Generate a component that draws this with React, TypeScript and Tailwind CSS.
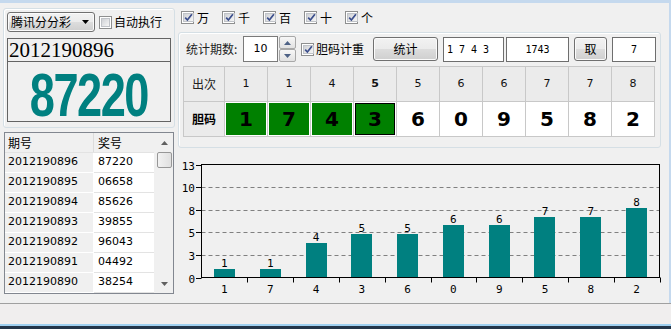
import React from 'react';

const cjk = "font-['Noto_Sans_CJK_SC',sans-serif]";
const btnBg =
  'bg-[linear-gradient(#f2f2f2,#ebebeb_50%,#dddddd_50%,#cfcfcf)] border border-[#707070] rounded-[3px] shadow-[inset_0_0_0_1px_#fbfbfb]';

function CheckBox({ checked = false }: { checked?: boolean }) {
  return (
    <span className="w-[13px] h-[13px] shrink-0 border border-[#8e8f8f] bg-white p-[1px] flex">
      <span className="flex-1 flex items-center justify-center bg-[linear-gradient(135deg,#cfd1d5,#f6f6f6)] border border-[#c0c3c8]">
        {checked && (
          <svg width="9" height="9" viewBox="0 0 9 9">
            <path d="M1.2 4.6 L3.4 7 L7.9 1.2" stroke="#3b4e8c" strokeWidth="1.7" fill="none" />
          </svg>
        )}
      </span>
    </span>
  );
}

const history = [
  ['2012190896', '87220'],
  ['2012190895', '06658'],
  ['2012190894', '85626'],
  ['2012190893', '39855'],
  ['2012190892', '96043'],
  ['2012190891', '04492'],
  ['2012190890', '38254'],
];

const times = ['1', '1', '4', '5', '5', '6', '6', '7', '7', '8'];
const dan = ['1', '7', '4', '3', '6', '0', '9', '5', '8', '2'];
const counts = [1, 1, 4, 5, 5, 6, 6, 7, 7, 8];

function Chart() {
  const left = 23.5;
  const right = 481.5;
  const top = 14.5;
  const bottom = 127.5;
  const unit = (bottom - top) / 13;
  const step = (right - left) / 10;
  const grid = [
    { v: 10.4, label: '10' },
    { v: 7.8, label: '8' },
    { v: 5.2, label: '5' },
    { v: 2.6, label: '3' },
  ];
  const yOf = (v: number) => bottom - v * unit;
  const font = { fontFamily: 'DejaVu Sans Mono, monospace', fontSize: 11 };

  return (
    <svg width="483" height="150" className="block">
      {grid.map((g) => (
        <line
          key={g.label}
          x1={left}
          x2={right}
          y1={Math.round(yOf(g.v)) + 0.5}
          y2={Math.round(yOf(g.v)) + 0.5}
          stroke="#808080"
          strokeDasharray="4 3"
        />
      ))}
      {counts.map((c, i) => {
        const cx = left + step * i + step / 2;
        const y = Math.round(yOf(c));
        return (
          <g key={i}>
            <rect x={Math.round(cx - 10.5)} y={y} width={21} height={bottom - 0.5 - y} fill="#008080" />
            <text x={cx} y={y - 2} textAnchor="middle" {...font} fill="#000">
              {c}
            </text>
            <text x={cx} y={143} textAnchor="middle" {...font} fill="#000">
              {dan[i]}
            </text>
            <line x1={Math.round(left + step * (i + 1)) + 0.5} x2={Math.round(left + step * (i + 1)) + 0.5} y1={bottom} y2={bottom + 5} stroke="#000" />
          </g>
        );
      })}
      <rect x={left} y={top} width={right - left} height={bottom - top} fill="none" stroke="#000" />
      {[{ v: 13, label: '13' }, ...grid, { v: 0, label: '0' }].map((g) => {
        const y = Math.round(yOf(g.v)) + 0.5;
        return (
          <g key={'y' + g.label}>
            <line x1={18} x2={left} y1={y} y2={y} stroke="#000" />
            <text x={17} y={y + 4} textAnchor="end" {...font} fill="#000">
              {g.label}
            </text>
          </g>
        );
      })}
    </svg>
  );
}

function LeftPanel() {
  return (
    <div className="w-[177px] flex flex-col">
      <div className="mt-[5px] ml-[3px] w-[172px] h-[120px] border border-[#d5dfe5] rounded-[3px] shadow-[inset_1px_1px_0_#fff] px-[3px] pt-[3px]">
        <div className="flex items-center h-[20px]">
          <div className={`w-[88px] h-[20px] ${btnBg} flex items-center pl-[3px] pr-[5px]`}>
            <span className={`${cjk} text-[12px] leading-none text-black flex-1`}>腾讯分分彩</span>
            <svg width="7" height="4" viewBox="0 0 7 4">
              <path d="M0 0 H7 L3.5 4 Z" fill="#000" />
            </svg>
          </div>
          <div className="ml-[4px] flex items-center gap-[2px]">
            <CheckBox />
            <span className={`${cjk} text-[12px] leading-none text-black`}>自动执行</span>
          </div>
        </div>
        <div className="mt-[6px] w-[164px] h-[24px] border border-[#646464] flex items-center pl-[1px]">
          <span className="font-['Liberation_Serif',serif] text-[21px] leading-none text-black">2012190896</span>
        </div>
        <div className="w-[164px] h-[60px] border-x border-b border-[#646464] flex items-center justify-center">
          <span className="inline-block scale-x-[0.74] font-['Liberation_Sans',sans-serif] font-bold text-[61px] leading-none text-[#008080] mt-[8px] tracking-[-2px]">
            87220
          </span>
        </div>
      </div>

      <div className="mt-[4px] ml-[4px] w-[170px] h-[162px] border border-[#828790] bg-white flex font-['DejaVu_Sans',sans-serif] text-[11px] text-black">
        <div className="w-[149px] flex flex-col">
          <div className="flex h-[20px] bg-[#f0f0f0] border-b border-[#e3e3e3]">
            <div className={`w-[89px] border-r border-[#dcdcdc] pl-[3px] flex items-center ${cjk} text-[12px]`}>期号</div>
            <div className={`w-[60px] pl-[4px] flex items-center ${cjk} text-[12px]`}>奖号</div>
          </div>
          {history.map(([q, n]) => (
            <div key={q} className="flex h-[20px]">
              <div className="w-[89px] bg-[#f0f0f0] border-r border-b border-[#ffffff] pl-[3px] flex items-center">{q}</div>
              <div className="w-[60px] bg-white border-b border-[#e3e3e3] pl-[4px] flex items-center">{n}</div>
            </div>
          ))}
        </div>
        <div className="w-[2px] bg-[#f0f0f0]" />
        <div className="w-[17px] bg-[#f0f0f0] flex flex-col items-center">
          <div className="h-[19px] flex items-center justify-center">
            <svg width="7" height="4" viewBox="0 0 7 4">
              <path d="M0 4 H7 L3.5 0 Z" fill="#606060" />
            </svg>
          </div>
          <div className="w-[15px] h-[16px] border border-[#979797] rounded-[2px] bg-[linear-gradient(90deg,#f2f2f2,#e0e0e0)]" />
          <div className="flex-1" />
          <div className="h-[19px] flex items-center justify-center">
            <svg width="7" height="4" viewBox="0 0 7 4">
              <path d="M0 0 H7 L3.5 4 Z" fill="#606060" />
            </svg>
          </div>
        </div>
      </div>
    </div>
  );
}

function RightPanel() {
  const boxes = ['万', '千', '百', '十', '个'];
  return (
    <div className="w-[492px] flex flex-col">
      <div className="mt-[8px] pl-[4px] flex h-[13px]">
        {boxes.map((b) => (
          <div key={b} className="w-[41px] flex items-center gap-[3px]">
            <CheckBox checked />
            <span className={`${cjk} text-[12px] leading-none text-black`}>{b}</span>
          </div>
        ))}
      </div>

      <div className="mt-[8px] ml-[1px] w-[483px] h-[116px] border border-[#d5dfe5] rounded-[3px] shadow-[inset_1px_1px_0_#fff] pt-[3px] pl-[4px]">
        <div className={`flex items-center h-[26px] ml-[3px] ${cjk} text-[12px] text-black`}>
          <span className="w-[57px] leading-none text-[#222]">统计期数:</span>
          <div className="w-[35px] h-[26px] border border-[#7a7a7a] bg-white flex items-center justify-center font-['DejaVu_Sans',sans-serif] text-[11px]">
            10
          </div>
          <div className="ml-[1px] w-[17px] h-[26px] flex flex-col">
            {[0, 1].map((i) => (
              <div key={i} className="flex-1 border border-[#a8a8a8] rounded-[2px] bg-[linear-gradient(#f7f7f7,#e2e2e2)] flex items-center justify-center">
                <svg width="7" height="4" viewBox="0 0 7 4">
                  <path d={i === 0 ? 'M0 4 H7 L3.5 0 Z' : 'M0 0 H7 L3.5 4 Z'} fill="#4e6286" />
                </svg>
              </div>
            ))}
          </div>
          <div className="ml-[5px]">
            <CheckBox checked />
          </div>
          <span className="ml-[2px] w-[48px] leading-none">胆码计重</span>
          <button className={`ml-[9px] w-[65px] h-[24px] ${btnBg} text-[12px] leading-none`}>统计</button>
          <div className="ml-[5px] w-[61px] h-[25px] border border-[#6e6e6e] bg-white flex items-center pl-[3px] font-['DejaVu_Sans_Mono',monospace] text-[10px]">
            1 7 4 3
          </div>
          <div className="ml-[2px] w-[63px] h-[25px] border border-[#6e6e6e] bg-white flex items-center justify-center font-['DejaVu_Sans_Mono',monospace] text-[10px]">
            1743
          </div>
          <button className={`ml-[5px] w-[33px] h-[24px] ${btnBg} text-[12px] leading-none`}>取</button>
          <div className="ml-[5px] w-[44px] h-[25px] border border-[#6e6e6e] bg-white flex items-center justify-center font-['DejaVu_Sans_Mono',monospace] text-[10px]">
            7
          </div>
        </div>

        <div className="mt-[4px] w-[472px] border-l border-t border-[#c8c8c8] grid grid-cols-[41px_repeat(10,43px)]">
          <div className={`h-[35px] bg-[#ebebeb] border-r border-b border-[#c8c8c8] flex items-center justify-center ${cjk} text-[12px] text-[#222]`}>
            出次
          </div>
          {times.map((t, i) => (
            <div
              key={'t' + i}
              className={`h-[35px] bg-[#ebebeb] border-r border-b border-[#c8c8c8] flex items-center justify-center font-['DejaVu_Sans',sans-serif] text-[11px] text-[#111] ${i === 3 ? 'font-bold' : ''}`}
            >
              {t}
            </div>
          ))}
          <div className={`h-[35px] bg-[#ebebeb] border-r border-b border-[#c8c8c8] flex items-center justify-center ${cjk} text-[12px] font-bold text-black`}>
            胆码
          </div>
          {dan.map((d, i) => (
            <div key={'d' + i} className="h-[35px] bg-white border-r border-b border-[#c8c8c8] p-[1px] flex">
              <div
                className={`flex-1 flex items-center justify-center font-['DejaVu_Sans',sans-serif] font-bold text-[20px] text-black ${
                  i < 4 ? 'bg-[#008000]' : 'bg-white'
                } ${i === 3 ? 'border border-black' : ''}`}
              >
                {d}
              </div>
            </div>
          ))}
        </div>
      </div>

      <div className="mt-[2px] ml-[1px]">
        <Chart />
      </div>
    </div>
  );
}

export default function App() {
  return (
    <div className={`w-[671px] h-[329px] bg-[#f0f0f0] flex flex-col overflow-hidden ${cjk}`}>
      <div className="h-[3px] bg-[#c5d9ee]" />
      <div className="flex h-[300px]">
        <LeftPanel />
        <RightPanel />
        <div className="w-[2px] bg-[#c5d9ee]" />
      </div>
      <div className="h-[21px] border-t border-[#a0a0a0] bg-[#f0eeee]" />
      <div className="h-[2px] bg-[#9fd0f0]" />
      <div className="h-[3px] bg-[#23364a]" />
    </div>
  );
}
